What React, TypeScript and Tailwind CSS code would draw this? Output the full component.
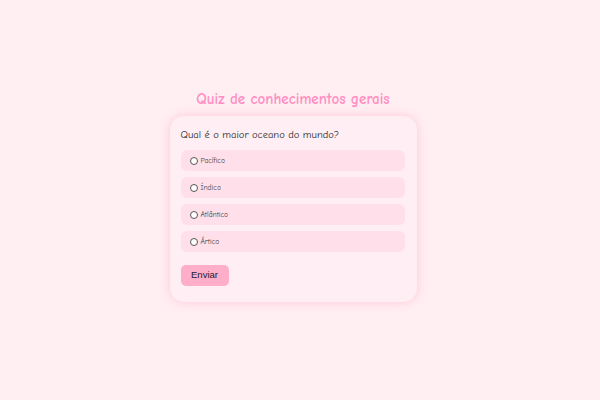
export default function App() {
  const opts = ["Pacífico", "Índico", "Atlântico", "Ártico"];
  return (
    <div className="w-[600px] h-[400px] bg-[#ffeef2] flex flex-col items-center pt-[89px] pr-[14px]" style={{ fontFamily: '"Comic Sans MS", "Comic Neue", "DejaVu Sans", sans-serif' }}>
      <h1 className="text-[15px] leading-[20px] font-bold text-[#ff8fc3] mb-[7px]">Quiz de conhecimentos gerais</h1>
      <div className="w-[247px] bg-[#ffeef3] rounded-[14px] shadow-[0_0_10px_rgba(255,170,195,0.55)] px-[11px] pt-[11px] pb-[16px]">
        <p className="text-[10.5px] leading-[16px] text-[#2a2a2a] mb-[7px]">Qual é o maior oceano do mundo?</p>
        <div className="flex flex-col gap-[6px]">
          {opts.map((o) => (
            <div key={o} className="h-[21px] bg-[#ffe0ea] rounded-[6px] flex items-center pl-[9px] mr-[1px]">
              <span className="w-[8px] h-[8px] rounded-full border border-[#555] bg-white mr-[3px] shrink-0"></span>
              <span className="text-[7.5px] leading-[8px] text-[#444]">{o}</span>
            </div>
          ))}
        </div>
        <button className="mt-[13px] w-[48px] h-[21px] rounded-[5px] bg-[#ffaec9] text-[9.5px] text-[#1c1c30] block" style={{ fontFamily: '"Liberation Sans", Arial, sans-serif' }}>Enviar</button>
      </div>
    </div>
  );
}
